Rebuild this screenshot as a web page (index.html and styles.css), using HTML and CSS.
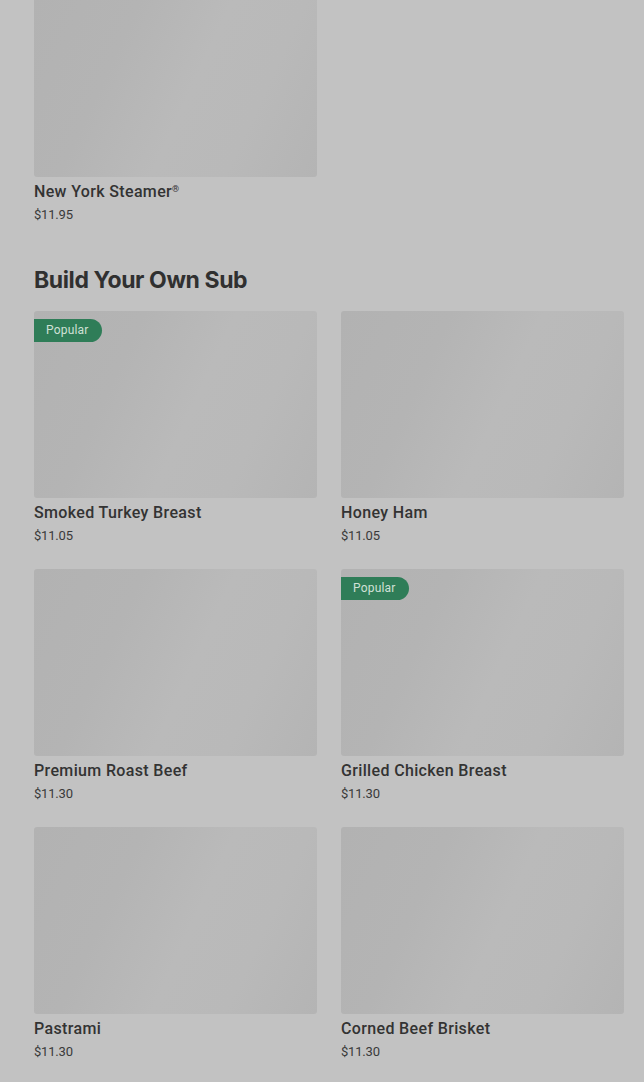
FILE: index.html
```html
<!DOCTYPE html>
<html lang="en">
<head>
<meta charset="utf-8">
<title>Menu</title>
<link rel="stylesheet" href="styles.css">
</head>
<body>
<main class="menu">
  <section class="section first">
    <div class="grid">
      <div class="card">
        <div class="thumb"></div>
        <div class="name">New York Steamer<sup class="reg">®</sup></div>
        <div class="price">$11.95</div>
      </div>
    </div>
  </section>
  <section class="section">
    <h2 class="heading">Build Your Own Sub</h2>
    <div class="grid">
      <div class="card">
        <div class="thumb"><span class="badge">Popular</span></div>
        <div class="name">Smoked Turkey Breast</div>
        <div class="price">$11.05</div>
      </div>
      <div class="card">
        <div class="thumb"></div>
        <div class="name">Honey Ham</div>
        <div class="price">$11.05</div>
      </div>
      <div class="card">
        <div class="thumb"></div>
        <div class="name">Premium Roast Beef</div>
        <div class="price">$11.30</div>
      </div>
      <div class="card">
        <div class="thumb"><span class="badge">Popular</span></div>
        <div class="name">Grilled Chicken Breast</div>
        <div class="price">$11.30</div>
      </div>
      <div class="card">
        <div class="thumb"></div>
        <div class="name">Pastrami</div>
        <div class="price">$11.30</div>
      </div>
      <div class="card">
        <div class="thumb"></div>
        <div class="name">Corned Beef Brisket</div>
        <div class="price">$11.30</div>
      </div>
    </div>
  </section>
</main>
</body>
</html>
```
FILE: styles.css
```css
html, body {
  margin: 0;
  padding: 0;
  background: #c2c2c2;
  height: 100%;
  overflow: hidden;
}
body {
  font-family: Roboto, "Liberation Sans", sans-serif;
  color: #333333;
}
.menu {
  padding: 0 20px 0 34px;
}
.section.first {
  margin-top: -10px;
}
.heading {
  margin: 39px 0 15px;
  font-family: Inter, "Liberation Sans", sans-serif;
  font-weight: 700;
  font-size: 23px;
  letter-spacing: -0.4px;
  line-height: 32px;
  color: #303030;
}
.grid {
  display: grid;
  grid-template-columns: 283px 283px;
  column-gap: 24px;
  row-gap: 23px;
}
.card {
  display: flex;
  flex-direction: column;
}
.thumb {
  position: relative;
  height: 187px;
  border-radius: 3px;
  background: linear-gradient(115deg, #b2b2b2 0%, #b4b4b4 30%, #bababa 55%, #b9b9b9 75%, #b4b4b4 100%);
}
.badge {
  position: absolute;
  left: 0;
  top: 8px;
  height: 23px;
  padding: 0 13px 0 12px;
  background: #2f7d58;
  color: #cfe0d6;
  font-size: 12px;
  letter-spacing: 0.2px;
  line-height: 23px;
  border-radius: 0 12px 12px 0;
}
.name {
  margin-top: 3px;
  font-size: 16px;
  line-height: 24px;
  font-weight: 500;
  letter-spacing: 0.35px;
  color: #333333;
}
.reg {
  font-size: 9px;
  vertical-align: 5px;
  line-height: 0;
}
.price {
  margin-top: 1px;
  font-size: 13px;
  line-height: 20px;
  letter-spacing: -0.2px;
  color: #3a3a3a;
}
```
